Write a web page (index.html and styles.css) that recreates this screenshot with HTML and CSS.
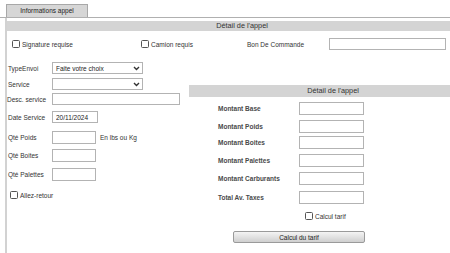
FILE: index.html
```html
<!DOCTYPE html>
<html lang="fr">
<head>
  <meta charset="UTF-8">
  <title>Informations appel</title>
  <link rel="stylesheet" href="styles.css">
</head>
<body>
  <div class="tabs">
    <div class="tab">Informations appel</div>
  </div>

  <div class="panel">
    <div class="bar">Détail de l'appel</div>

    <div class="toprow">
      <label class="check sig"><input type="checkbox">Signature requise</label>
      <label class="check camion"><input type="checkbox">Camion requis</label>
      <span class="bon-label">Bon De Commande</span>
      <input class="field bon" type="text">
    </div>

    <div class="main">
      <div class="left">
        <span class="lbl">TypeEnvoi</span>
        <div class="select">
          <select><option>Faite votre choix</option></select>
          <svg class="chev" width="7" height="5" viewBox="0 0 7 5"><path d="M1 1 L3.5 3.5 L6 1" fill="none" stroke="#333" stroke-width="1.4"/></svg>
        </div>

        <span class="lbl">Service</span>
        <div class="select">
          <select><option></option></select>
          <svg class="chev" width="7" height="5" viewBox="0 0 7 5"><path d="M1 1 L3.5 3.5 L6 1" fill="none" stroke="#333" stroke-width="1.4"/></svg>
        </div>

        <span class="lbl tight">Desc. service</span>
        <input class="field desc" type="text">

        <span class="lbl">Date Service</span>
        <input class="field date" type="text" value="20/11/2024">

        <span class="lbl">Qté Poids</span>
        <div class="with-unit">
          <input class="field qty" type="text">
          <span>En lbs ou Kg</span>
        </div>

        <span class="lbl">Qté Boites</span>
        <input class="field qty" type="text">

        <span class="lbl">Qté Palettes</span>
        <input class="field qty" type="text">

        <label class="check retour"><input type="checkbox">Allez-retour</label>
      </div>

      <div class="right">
        <div class="bar small">Détail de l'appel</div>

        <div class="amounts">
          <span class="amt">Montant Base</span>
          <input class="field money" type="text">
          <span class="amt">Montant Poids</span>
          <input class="field money" type="text">
          <span class="amt">Montant Boites</span>
          <input class="field money" type="text">
          <span class="amt">Montant Palettes</span>
          <input class="field money" type="text">
          <span class="amt">Montant Carburants</span>
          <input class="field money" type="text">
          <span class="amt">Total Av. Taxes</span>
          <input class="field money" type="text">
        </div>

        <label class="check calc"><input type="checkbox">Calcul tarif</label>
        <button class="calc-button">Calcul du tarif</button>
      </div>
    </div>
  </div>
</body>
</html>
```

FILE: styles.css
```css
* {
  box-sizing: border-box;
}

body {
  margin: 0;
  background-color: white;
  font-family: 'Liberation Sans', Arial, sans-serif;
  font-size: 6.5px;
  color: #333;
  overflow: hidden;
}

.tabs {
  padding: 4px 0 0 6px;
  border-bottom: 1px solid #b0b0b0;
}

.tab {
  width: 82px;
  height: 13px;
  line-height: 12px;
  text-align: center;
  background-color: #d6d6d6;
  border: 1px solid #a8a8a8;
  border-bottom: none;
  color: #222;
}

.panel {
  margin-left: 5px;
  border-left: 2px solid #d2d2d2;
  padding-top: 3px;
  height: 240px;
}

.bar {
  height: 10px;
  line-height: 10px;
  padding-left: 27px;
  background-color: #d4d4d4;
  text-align: center;
  font-size: 7.3px;
  color: #333;
}

.bar.small {
  height: 12px;
  line-height: 12px;
  margin-top: 25px;
}

.field {
  border: 1px solid #b3b3b3;
  background-color: white;
  height: 12px;
  padding: 0 3px;
  font-family: inherit;
  font-size: 6.5px;
  color: #222;
  outline: none;
  margin: 0;
}

.check {
  display: flex;
  align-items: center;
}

.check input {
  appearance: none;
  width: 8px;
  height: 8px;
  margin: 0 2px 0 0;
  border: 1px solid #555;
  border-radius: 1.5px;
  background-color: white;
}

.toprow {
  display: flex;
  align-items: center;
  height: 16px;
  margin-top: 5px;
  padding-left: 5px;
}

.sig {
  width: 129px;
}

.camion {
  width: 106px;
}

.bon-label {
  width: 82px;
}

.bon {
  width: 117px;
}

.main {
  display: grid;
  grid-template-columns: 182px 1fr;
  margin-top: 8px;
}

.left {
  display: grid;
  grid-template-columns: 45px auto;
  grid-template-rows: 16px 16px 14px 22px 18px 18px 20px 22px;
  align-items: center;
}

.lbl {
  padding-left: 1px;
}

.lbl.tight {
  padding-left: 0;
}

.select {
  position: relative;
  width: 91px;
  height: 12px;
}

.select select {
  appearance: none;
  width: 100%;
  height: 100%;
  border: 1px solid #b3b3b3;
  background-color: white;
  padding: 0 3px;
  font-family: inherit;
  font-size: 6.5px;
  color: #222;
  outline: none;
}

.chev {
  position: absolute;
  right: 3px;
  top: 4px;
}

.desc {
  width: 128px;
}

.date {
  width: 46px;
}

.qty {
  width: 44px;
  height: 13px;
}

.with-unit {
  display: flex;
  align-items: center;
  gap: 4px;
}

.retour {
  grid-column: 1 / 3;
  padding-left: 3px;
}

.amounts {
  display: grid;
  grid-template-columns: 81px 65px;
  grid-template-rows: 22px 14px 18px 18px 18px 20px;
  align-items: center;
  padding-left: 29px;
}

.amt {
  font-weight: bold;
  color: #4a4a4a;
}

.money {
  height: 13px;
}

.calc {
  height: 18px;
  padding-left: 116px;
}

.calc-button {
  display: block;
  margin: 6px 0 0 44px;
  width: 132px;
  height: 12px;
  padding: 0;
  border: 1px solid #9a9a9a;
  border-radius: 2px;
  background: linear-gradient(#f4f4f4, #cfcfcf);
  font-family: inherit;
  font-size: 6.5px;
  color: #222;
}
```
